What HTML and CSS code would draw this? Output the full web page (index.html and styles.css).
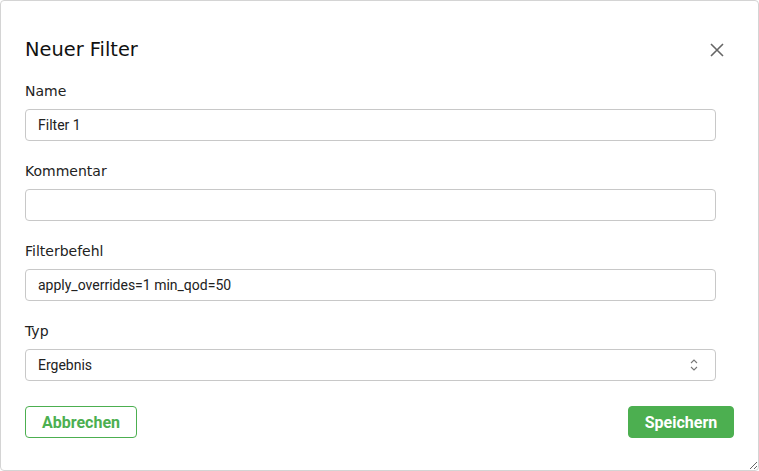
FILE: index.html
```html
<!DOCTYPE html>
<html lang="de">
<head>
<meta charset="utf-8">
<title>Neuer Filter</title>
<link rel="stylesheet" href="styles.css">
</head>
<body>
<div class="dialog">
  <div class="header">
    <h1 class="title">Neuer Filter</h1>
    <button class="close" aria-label="Schließen">
      <svg width="16" height="16" viewBox="0 0 16 16"><path d="M2 2L14 14M14 2L2 14" stroke="#666" stroke-width="1.6" fill="none"/></svg>
    </button>
  </div>
  <div class="field">
    <label class="label">Name</label>
    <div class="input">Filter 1</div>
  </div>
  <div class="field">
    <label class="label">Kommentar</label>
    <div class="input"></div>
  </div>
  <div class="field">
    <label class="label">Filterbefehl</label>
    <div class="input">apply_overrides=1 min_qod=50</div>
  </div>
  <div class="field">
    <label class="label">Typ</label>
    <div class="input select">
      <span>Ergebnis</span>
      <svg width="10" height="14" viewBox="0 0 10 14"><path d="M2 5L5 2L8 5M2 9L5 12L8 9" stroke="#777" stroke-width="1.1" fill="none"/></svg>
    </div>
  </div>
  <div class="footer">
    <button class="btn btn-outline">Abbrechen</button>
    <button class="btn btn-primary">Speichern</button>
  </div>
</div>
</body>
</html>
```
FILE: styles.css
```css
html, body { margin: 0; padding: 0; background: #fff; }
.dialog {
  box-sizing: border-box;
  width: 759px;
  height: 471px;
  border: 1px solid #d4d4d4;
  border-radius: 4px;
  padding: 0 24px 0 24px;
  resize: both;
  overflow: hidden;
  display: flex;
  flex-direction: column;
}
.header {
  display: flex;
  justify-content: space-between;
  align-items: center;
  padding-top: 35px;
  height: 28px;
  margin-bottom: 17px;
}
.title {
  margin: 0;
  font-family: "DejaVu Sans", sans-serif;
  font-weight: normal;
  font-size: 19.4px;
  line-height: 28px;
  color: #111;
}
.close {
  border: none;
  background: none;
  padding: 0;
  margin-right: 9px;
  width: 16px;
  height: 16px;
  display: flex;
}
.field { display: flex; flex-direction: column; margin-bottom: 20px; }
.label {
  font-family: "DejaVu Sans", sans-serif;
  font-size: 14px;
  line-height: 20px;
  color: #222;
  margin-bottom: 8px;
}
.input {
  box-sizing: border-box;
  height: 32px;
  border: 1px solid #c8c8c8;
  border-radius: 4px;
  padding: 0 12px;
  margin-right: 18px;
  font-family: Roboto, sans-serif;
  font-size: 14px;
  color: #222;
  display: flex;
  align-items: center;
}
.select { justify-content: space-between; padding-right: 16px; }
.footer {
  display: flex;
  justify-content: space-between;
  margin-top: 5px;
}
.btn {
  box-sizing: border-box;
  height: 32px;
  border-radius: 4px;
  font-family: Roboto, sans-serif;
  font-weight: bold;
  font-size: 16px;
  padding: 0 12px;
  cursor: pointer;
}
.btn-outline { background: #fff; border: 1px solid #4caf50; color: #4caf50; width: 112px; }
.btn-primary { background: #4caf50; border: 1px solid #4caf50; color: #fff; width: 106px; }
```
